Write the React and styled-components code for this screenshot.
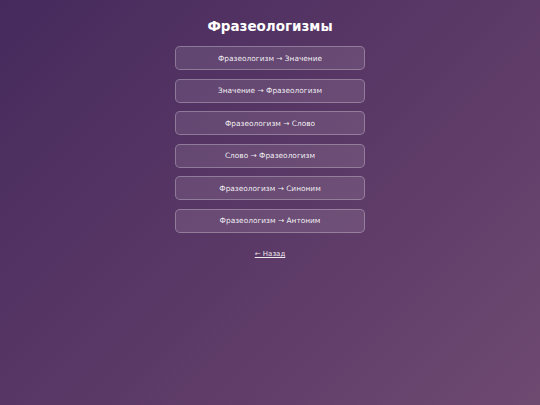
import React from "react";
import styled, { createGlobalStyle } from "styled-components";

const GlobalStyle = createGlobalStyle`
  html, body {
    margin: 0;
    padding: 0;
    height: 100%;
  }
  body {
    font-family: "DejaVu Sans", Verdana, sans-serif;
    background: linear-gradient(135deg, #462a5d 0%, #5a3866 50%, #6e4a71 100%);
    color: #fff;
  }
  #root {
    min-height: 100%;
  }
`;

const Page = styled.main`
  min-height: 405px;
  display: flex;
  flex-direction: column;
  align-items: center;
  padding-top: 16px;
  box-sizing: border-box;
`;

const Title = styled.h1`
  margin: 0 0 10px;
  font-size: 13.5px;
  line-height: 20px;
  font-weight: bold;
  color: #fff;
`;

const Menu = styled.nav`
  display: flex;
  flex-direction: column;
  gap: 8.5px;
  width: 190px;
`;

const ModeButton = styled.button`
  height: 24px;
  padding: 0;
  border: 1px solid rgba(255, 255, 255, 0.28);
  border-radius: 5px;
  background: rgba(255, 255, 255, 0.1);
  color: rgba(255, 255, 255, 0.92);
  font-family: inherit;
  font-size: 7.4px;
  cursor: pointer;

  &:hover {
    background: rgba(255, 255, 255, 0.18);
  }
`;

const BackLink = styled.a`
  margin-top: 17px;
  font-size: 7px;
  color: rgba(255, 255, 255, 0.9);
  text-decoration: underline;
`;

const modes = [
  "Фразеологизм → Значение",
  "Значение → Фразеологизм",
  "Фразеологизм → Слово",
  "Слово → Фразеологизм",
  "Фразеологизм → Синоним",
  "Фразеологизм → Антоним",
];

export default function App() {
  return (
    <>
      <GlobalStyle />
      <Page>
        <Title>Фразеологизмы</Title>
        <Menu>
          {modes.map((mode) => (
            <ModeButton key={mode}>{mode}</ModeButton>
          ))}
        </Menu>
        <BackLink href="#">← Назад</BackLink>
      </Page>
    </>
  );
}
